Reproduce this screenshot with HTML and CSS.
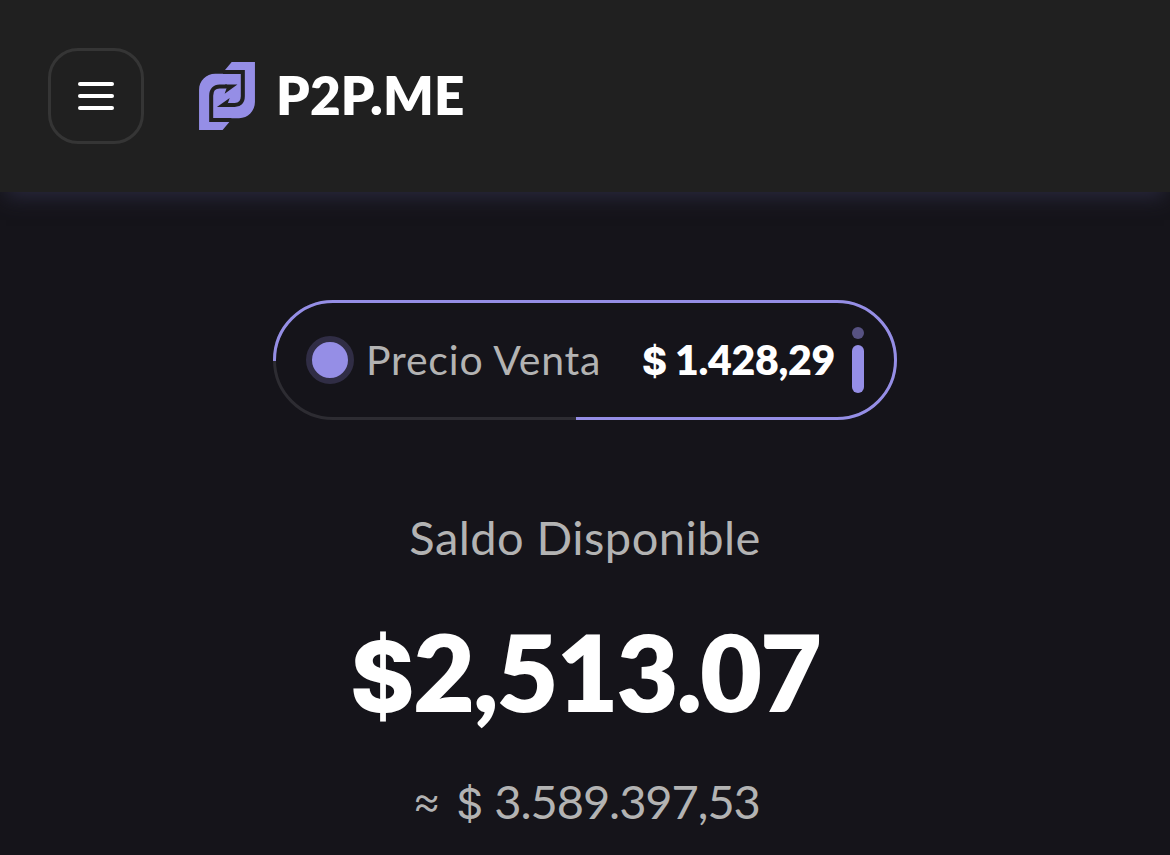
FILE: index.html
```
<!DOCTYPE html>
<html lang="es">

<head>
    <meta charset="UTF-8">
    <meta name="viewport" content="width=device-width, initial-scale=1.0">
    <title>P2P.ME</title>
    <link rel="stylesheet" href="styles.css">
</head>

<body>

    <header class="header">
        <button class="menu-btn" aria-label="Menú">
            <span></span>
            <span></span>
            <span></span>
        </button>
        <div class="brand">
            <svg class="brand-logo" viewBox="27 37 166 202">
                <path fill="#958ee6" d="M27 239V120C27 93 48 72 75 72H104V61L124 37H193V156C193 183 172 204 146 204H117V215L97 239Z" />
                <path fill="none" stroke="#202020" stroke-width="12" d="M98 66.5H157V139C157 156 147 165 133 165H111M123 209.500H63V137C63 120 73 110 88 110H110" />
                <path fill="#202020" d="M104 104H141L103 131L109 114ZM117 171H80L118 144L112 161Z" />
            </svg>
            <span class="brand-name">P2P.ME</span>
        </div>
    </header>

    <main class="content">
        <div class="price-pill">
            <!-- countdown border -->
            <svg class="pill-border" viewBox="0 0 624 120" fill="none" stroke-width="3">
                <rect x="1.5" y="1.5" width="621" height="117" rx="58.5" stroke="#2d2c32" />
                <path stroke="#958ee6" d="M1.5 61V60A58.500 58.500 0 0 1 60 1.500H564A58.500 58.500 0 0 1 564 118.500H303" />
            </svg>
            <span class="dot"></span>
            <span class="price-label">Precio Venta</span>
            <span class="price-value"><span class="currency">$</span>1.428,29</span>
            <span class="info"></span>
        </div>

        <p class="balance-label">Saldo Disponible</p>
        <h1 class="balance"><span class="currency">$</span>2,513.07</h1>
        <p class="balance-local"><span class="approx">≈</span><span class="currency">$</span>3.589.397,53</p>
    </main>

</body>

</html>
```
FILE: styles.css
```
body {
    font-family: Lato, sans-serif;
    background: #15141a;
    color: #fff;
    margin: 0;
    height: 855px;
    overflow: hidden;
}

.header {
    display: flex;
    align-items: center;
    gap: 55px;
    height: 192px;
    padding: 0 48px;
    box-sizing: border-box;
    background: #202020;
    box-shadow: 0 10px 20px -6px #2b2a40;
}

.menu-btn {
    display: flex;
    flex-direction: column;
    align-items: center;
    justify-content: center;
    gap: 8px;
    width: 96px;
    height: 96px;
    padding: 0;
    background: none;
    border: 3px solid #353535;
    border-radius: 30px;
}

.menu-btn span {
    width: 36px;
    height: 4px;
    border-radius: 2px;
    background: #fff;
}

.brand {
    display: flex;
    align-items: center;
    gap: 21px;
}

.brand-logo {
    width: 56px;
    height: 68px;
}

.brand-name {
    padding-bottom: 3px;
    font-size: 53px;
    line-height: 64px;
    font-weight: 800;
    letter-spacing: 0.2px;
    white-space: nowrap;
}

.content {
    display: flex;
    flex-direction: column;
    align-items: center;
    padding-top: 108px;
}

.price-pill {
    position: relative;
    display: flex;
    align-items: center;
    width: 624px;
    height: 120px;
    padding: 0 33px;
    box-sizing: border-box;
}

.pill-border {
    position: absolute;
    inset: 0;
}

.dot {
    width: 36px;
    height: 36px;
    border: 6px solid #302d45;
    border-radius: 50%;
    background: #958ee6;
}

.price-label {
    width: 276px;
    margin-left: 12px;
    padding-bottom: 2px;
    font-size: 41px;
    letter-spacing: 0.8px;
    color: #b3b3b3;
    white-space: nowrap;
}

.price-value {
    display: flex;
    align-items: baseline;
    width: 210px;
    font-size: 41px;
    line-height: 50px;
    font-weight: 800;
    letter-spacing: -0.3px;
    white-space: nowrap;
}

.currency {
    font-family: Inter, sans-serif;
    font-weight: 800;
    letter-spacing: 0;
}

.price-value .currency {
    width: 33px;
    font-size: 38px;
}

.info {
    width: 12px;
    height: 48px;
    margin-top: 18px;
    border-radius: 6px;
    background: #958ee6;
}

.info::before {
    content: "";
    display: block;
    width: 12px;
    height: 12px;
    margin-top: -18px;
    border-radius: 50%;
    background: #575282;
}

.balance-label {
    margin: 87px 0 0;
    font-size: 47px;
    line-height: 60px;
    letter-spacing: 0.45px;
    color: #b3b3b3;
}

.balance {
    display: flex;
    align-items: baseline;
    height: 140px;
    margin: 34px 0 0;
    font-size: 107px;
    line-height: 140px;
    font-weight: 800;
    letter-spacing: -2.1px;
}

.balance .currency {
    width: 63px;
    font-size: 98px;
}

.balance-local {
    display: flex;
    align-items: baseline;
    margin: 30px 0 0 2px;
    font-size: 47px;
    line-height: 60px;
    letter-spacing: -1.05px;
    color: #b3b3b3;
}

.balance-local .currency {
    width: 38px;
    font-size: 42px;
    font-weight: 400;
}

.approx {
    width: 44px;
    font-family: Inter, sans-serif;
    font-size: 44px;
    font-weight: 300;
    transform: translateY(-3px);
}
```
